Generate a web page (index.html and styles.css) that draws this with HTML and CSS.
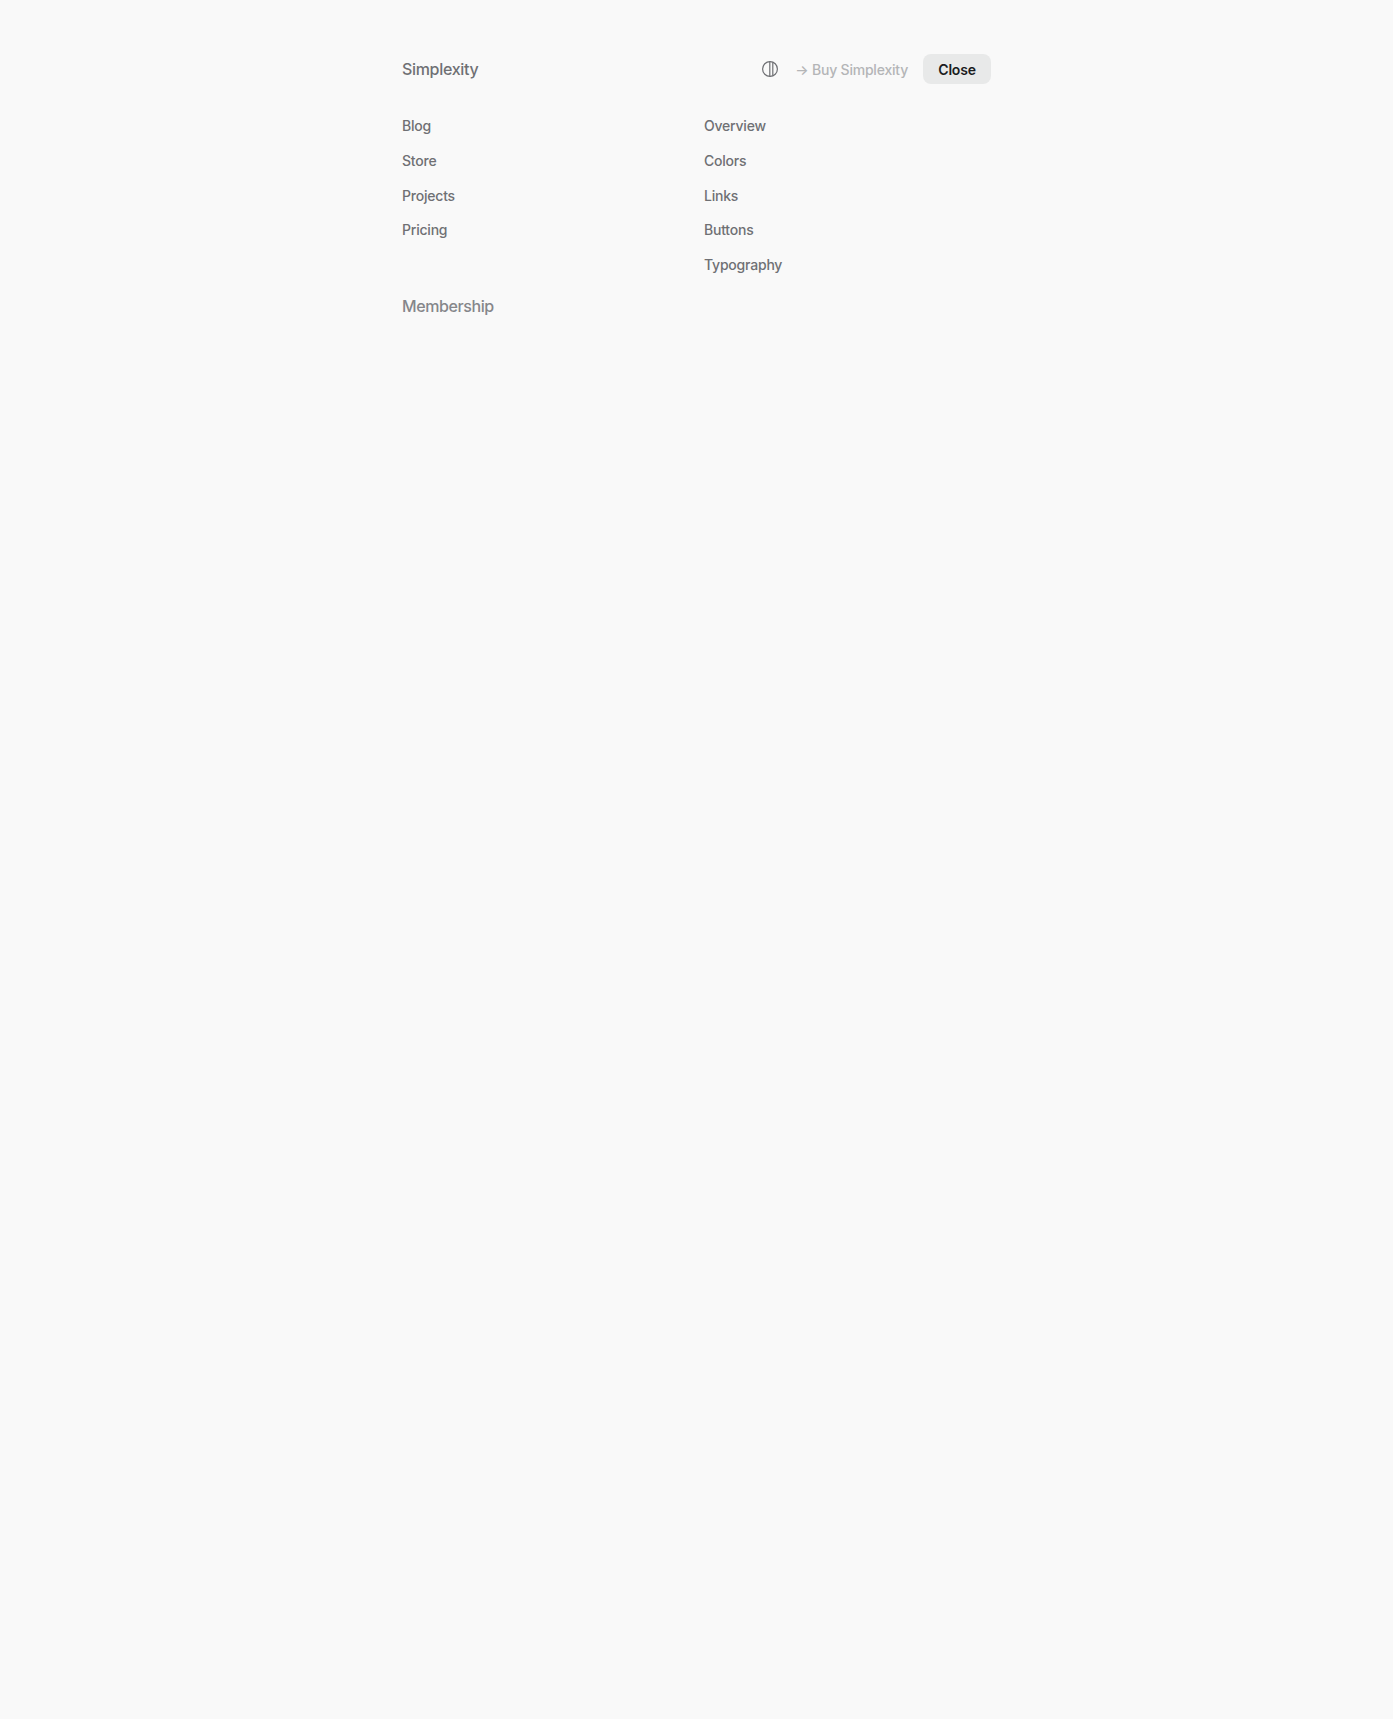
FILE: index.html
```html
<!DOCTYPE html>
<html lang="en">
<head>
<meta charset="utf-8">
<title>Simplexity</title>
<link rel="stylesheet" href="styles.css">
</head>
<body>
<div class="menu">
  <header class="top">
    <a class="brand">Simplexity</a>
    <div class="actions">
      <svg class="theme" viewBox="0 0 16 16" width="16" height="16" aria-hidden="true">
        <circle cx="8" cy="8" r="7.4"/>
        <path d="M7.8 .6V15.4M10.8 1.2V14.8"/>
      </svg>
      <a class="buy"><span class="arrow">→</span> Buy Simplexity</a>
      <button class="close">Close</button>
    </div>
  </header>
  <nav class="links">
    <ul class="col">
      <li>Blog</li>
      <li>Store</li>
      <li>Projects</li>
      <li>Pricing</li>
    </ul>
    <ul class="col">
      <li>Overview</li>
      <li>Colors</li>
      <li>Links</li>
      <li>Buttons</li>
      <li>Typography</li>
    </ul>
  </nav>
  <div class="section">Membership</div>
</div>
</body>
</html>
```
FILE: styles.css
```css
* { box-sizing: border-box; }
html, body { margin: 0; height: 100%; }
body {
  background: #f9f9f9;
  font-family: Inter, "Liberation Sans", sans-serif;
  color: #6f7074;
  min-height: 1719px;
}
.menu {
  width: 589px;
  margin-left: 402px;
  padding-top: 54px;
}
.top {
  display: flex;
  justify-content: space-between;
  align-items: center;
  height: 30px;
}
.brand { font-size: 16px; font-weight: 500; letter-spacing: -0.02em; }
.actions { display: flex; align-items: center; }
.theme {
  fill: none;
  stroke: #6f7074;
  stroke-width: 1.2;
  margin-right: 17px;
}
.buy {
  font-size: 14px;
  font-weight: 500;
  letter-spacing: -0.015em;
  color: #b4b5b7;
  margin-right: 15px;
}
.close {
  width: 68px;
  height: 30px;
  border: 0;
  border-radius: 8px;
  background: #e8e9e9;
  color: #1b1c1e;
  font: 600 14px Inter, "Liberation Sans", sans-serif;
  letter-spacing: -0.015em;
  padding: 0;
}
.links {
  display: grid;
  grid-template-columns: 286px 1fr;
  column-gap: 16px;
  margin-top: 25px;
}
.col { list-style: none; margin: 0; padding: 0; }
.col li {
  height: 34.8px;
  line-height: 34.8px;
  font-size: 14px;
  font-weight: 500;
  letter-spacing: -0.015em;
}
.section {
  font-size: 16px;
  font-weight: 500;
  letter-spacing: -0.025em;
  color: #85868a;
  margin-top: 11px;
  line-height: 24px;
}
```
